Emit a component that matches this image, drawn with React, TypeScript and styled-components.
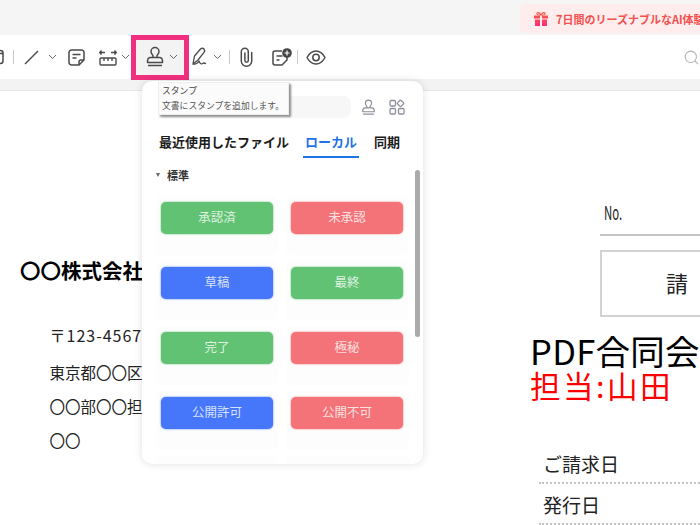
import React from "react";
import styled, { createGlobalStyle } from "styled-components";
import { Search } from "lucide-react";

const Global = createGlobalStyle`
  html, body { margin: 0; padding: 0; background: #fff; }
  body { font-family: "Noto Sans CJK JP", "Noto Sans", sans-serif; }
`;

const Page = styled.div`
  position: relative;
  width: 700px;
  height: 525px;
  overflow: hidden;
  display: flex;
  flex-direction: column;
  background: #fff;
`;

const TopBar = styled.header`
  height: 35px;
  flex: none;
  background: #f5f5f5;
  display: flex;
  justify-content: flex-end;
  align-items: flex-start;
  padding-top: 4px;
  box-sizing: border-box;
`;

const Promo = styled.div`
  width: 180px;
  height: 29px;
  background: #ffecec;
  border-radius: 6px 0 0 6px;
  display: flex;
  align-items: center;
  gap: 7px;
  padding-left: 13px;
  box-sizing: border-box;
  overflow: hidden;
  white-space: nowrap;
  color: #f2504f;
  font-size: 11px;
  font-weight: 700;
  svg { flex: none; }
`;

const Toolbar = styled.nav`
  height: 44px;
  flex: none;
  background: #fff;
  display: flex;
  align-items: center;
  position: relative;
  color: #4a4a4a;
`;

const ToolIcon = styled.span<{ $ml: number }>`
  margin-left: ${(p) => p.$ml}px;
  display: flex;
  flex: none;
  align-items: center;
`;

const Separator = styled.i<{ $ml: number }>`
  display: block;
  flex: none;
  width: 1px;
  height: 14px;
  background: #c8c8c8;
  margin-left: ${(p) => p.$ml}px;
`;

const Highlight = styled.div`
  margin-left: 1px;
  width: 58px;
  height: 45px;
  flex: none;
  box-sizing: border-box;
  border: 5px solid #f0307f;
  background: #f3f3f3;
  display: flex;
  align-items: center;
  padding-left: 8px;
  gap: 3px;
`;

const SearchSlot = styled.span`
  margin-left: auto;
  color: #b5b5b5;
  display: flex;
`;

const GrayBand = styled.div`
  height: 11px;
  flex: none;
  background: #f3f3f3;
  border-bottom: 1px solid #e6e6e8;
`;

const Sheet = styled.main`
  flex: 1;
  display: flex;
  background: #fff;
  color: #111;
  min-height: 0;
`;

const SenderColumn = styled.section`
  width: 530px;
  flex: none;
  padding: 166px 0 0 20px;
  box-sizing: border-box;
`;

const Company = styled.h2`
  margin: 0 0 40px;
  font-size: 20.5px;
  line-height: 26px;
  font-weight: 700;
  white-space: nowrap;
  color: #000;
`;

const SenderLine = styled.p<{ $gap: number; $spread?: boolean }>`
  margin: 0 0 ${(p) => p.$gap}px 29.5px;
  font-size: ${(p) => (p.$spread ? 16 : 15.5)}px;
  letter-spacing: ${(p) => (p.$spread ? 1 : 0)}px;
  line-height: 24px;
  white-space: nowrap;
  color: #222;
`;

const InvoiceColumn = styled.section`
  flex: 1;
  min-width: 0;
  overflow: hidden;
  display: flex;
  flex-direction: column;
  padding-top: 111px;
`;

const NumberRow = styled.div`
  margin-left: 70px;
  height: 32px;
  border-bottom: 2px solid #c4c4c4;
  padding-left: 4px;
  font-size: 19px;
  line-height: 20px;
  color: #222;
`;

const NumberLabel = styled.span`
  display: inline-block;
  transform: scaleX(0.6);
  transform-origin: left;
`;

const TitleBox = styled.div`
  margin: 14px 0 0 70px;
  width: 130px;
  height: 68px;
  box-sizing: border-box;
  border: 2px solid #d2d2d2;
  padding-left: 64px;
  font-size: 22px;
  line-height: 60px;
  color: #222;
`;

const ClientName = styled.div`
  margin-top: 14px;
  font-size: 34.5px;
  line-height: 38px;
  white-space: nowrap;
  letter-spacing: 0.3px;
  color: #000;
`;

const ContactName = styled.div`
  font-size: 30.5px;
  line-height: 32px;
  letter-spacing: 2.5px;
  white-space: nowrap;
  color: #ff0000;
`;

const DateRow = styled.div<{ $mt: number }>`
  margin: ${(p) => p.$mt}px 0 0 9px;
  height: 28px;
  padding-left: 4px;
  border-bottom: 2px dotted #c4c4c4;
  font-size: 19px;
  line-height: 20px;
  white-space: nowrap;
  color: #222;
`;

const Panel = styled.aside`
  position: absolute;
  left: 142px;
  top: 81px;
  width: 281px;
  height: 383px;
  background: #fff;
  border-radius: 10px;
  box-shadow: 0 0 8px rgba(0, 0, 0, 0.13);
  overflow: hidden;
  display: flex;
  flex-direction: column;
`;

const SearchRow = styled.div`
  margin: 15px 0 0 17px;
  height: 22px;
  display: flex;
  align-items: center;
  flex: none;
`;

const SearchField = styled.div`
  width: 192px;
  height: 22px;
  border-radius: 8px;
  background: #f7f7f8;
`;

const PanelIcon = styled.span<{ $ml: number }>`
  margin-left: ${(p) => p.$ml}px;
  display: flex;
  color: #8b8f9c;
`;

const Tabs = styled.div`
  margin: 13px 0 0 17px;
  height: 27px;
  display: flex;
  flex: none;
  white-space: nowrap;
`;

const Tab = styled.div<{ $active?: boolean; $ml: number; $w: number }>`
  margin-left: ${(p) => p.$ml}px;
  width: ${(p) => p.$w}px;
  box-sizing: border-box;
  height: 27px;
  text-align: center;
  font-size: 13px;
  line-height: 22px;
  font-weight: 700;
  color: ${(p) => (p.$active ? "#1f72ea" : "#1c1c1c")};
  border-bottom: 2px solid ${(p) => (p.$active ? "#1f72ea" : "transparent")};
`;

const SectionTitle = styled.div`
  margin: 8px 0 0 14px;
  height: 18px;
  display: flex;
  align-items: center;
  gap: 7px;
  flex: none;
  font-size: 11px;
  font-weight: 700;
  color: #333;
`;

const Caret = styled.i`
  width: 0;
  height: 0;
  border-left: 2.5px solid transparent;
  border-right: 2.5px solid transparent;
  border-top: 4px solid #666;
`;

const ScrollArea = styled.div`
  flex: 1;
  min-height: 0;
  overflow: hidden;
`;

const StampGrid = styled.div`
  margin: 12px 0 0 14px;
  display: grid;
  grid-template-columns: 122px 123px;
  grid-auto-rows: 59px;
  column-gap: 8px;
  row-gap: 6px;
`;

const StampCell = styled.div`
  background: #fdfdfd;
  border-radius: 6px;
  padding: 6px 5px;
  box-sizing: border-box;
`;

const colours = { green: "#62c274", red: "#f37378", blue: "#4677fb" };

const StampButton = styled.div<{ $tone: keyof typeof colours }>`
  height: 32px;
  width: 112px;
  box-sizing: border-box;
  padding-bottom: 4px;
  border-radius: 5px;
  background: ${(p) => colours[p.$tone]};
  box-shadow: 0 0 2px ${(p) => colours[p.$tone]};
  color: rgba(255, 255, 255, 0.8);
  display: flex;
  align-items: center;
  justify-content: center;
  font-size: 12.5px;
`;

const ScrollThumb = styled.div`
  position: absolute;
  right: 3px;
  top: 89px;
  width: 5px;
  height: 167px;
  border-radius: 3px;
  background: #ababab;
`;

const Tooltip = styled.div`
  position: absolute;
  left: 158px;
  top: 82px;
  width: 131px;
  height: 33px;
  box-sizing: border-box;
  padding: 0 0 0 3px;
  background: #fbfbfb;
  border: 1px solid #eee;
  box-shadow: 2px 2px 2px #8d8d8d;
  font-size: 8.8px;
  line-height: 15px;
  color: #555;
  white-space: nowrap;
`;

const TooltipTitle = styled.div`
  color: #444;
`;

const Chevron = () => (
  <svg width="9" height="6" viewBox="0 0 9 6" fill="none" stroke="#666" strokeWidth="1">
    <path d="M1 1l3.5 3.5L8 1" />
  </svg>
);

const StampIcon = ({ size = 22 }: { size?: number }) => (
  <svg width={size} height={size} viewBox="0 0 22 22" fill="none" stroke="currentColor" strokeWidth="1.5" strokeLinejoin="round">
    <path d="M9 11.5V10c0-1.200-2-2-2-4.500a4 4 0 0 1 8 0c0 2.500-2 3.300-2 4.500v1.500" />
    <path d="M3.5 15.500c0-2.500 1-4 3-4h9c2 0 3 1.500 3 4v1h-15z" />
    <path d="M4 19.500h14" />
  </svg>
);

const App = () => {
  const stamps: [string, keyof typeof colours][] = [
    ["承認済", "green"], ["未承認", "red"],
    ["草稿", "blue"], ["最終", "green"],
    ["完了", "green"], ["極秘", "red"],
    ["公開許可", "blue"], ["公開不可", "red"],
  ];
  return (
    <Page>
      <Global />
      <TopBar>
        <Promo>
          <svg width="16" height="16" viewBox="0 0 16 16">
            <defs>
              <linearGradient id="gift" x1="0" y1="0" x2="0" y2="1">
                <stop offset="0" stopColor="#f4574c" />
                <stop offset="1" stopColor="#ff2a7f" />
              </linearGradient>
            </defs>
            <path fill="url(#gift)" d="M1 4.500h6v3H1zM9 4.500h6v3H9zM2 8.500h5V15H2zM9 8.500h5V15H9z" />
            <path fill="none" stroke="#f4574c" strokeWidth="1.2" d="M8 4C6.500 1 3.500 1 4 3c.2 1 2 1 4 1zm0 0c1.500-3 4.500-3 4-1-.2 1-2 1-4 1z" />
          </svg>
          <span>7日間のリーズナブルなAI体験</span>
        </Promo>
      </TopBar>
      <Toolbar>
        <ToolIcon $ml={-11}>
          <svg width="15" height="16" viewBox="0 0 15 16" fill="none" stroke="currentColor" strokeWidth="1.5">
            <rect x="1" y="1.500" width="13" height="13" rx="2.500" />
            <path d="M8 1.500v3h6" />
          </svg>
        </ToolIcon>
        <Separator $ml={9} />
        <ToolIcon $ml={10}>
          <svg width="15" height="15" viewBox="0 0 15 15" fill="none" stroke="currentColor" strokeWidth="1.4">
            <path d="M1 14L14 1" />
          </svg>
        </ToolIcon>
        <ToolIcon $ml={9}><Chevron /></ToolIcon>
        <ToolIcon $ml={11}>
          <svg width="17" height="17" viewBox="0 0 17 17" fill="none" stroke="currentColor" strokeWidth="1.5" strokeLinejoin="round">
            <path d="M11 16H3.500A2.500 2.500 0 0 1 1 13.500v-10A2.500 2.500 0 0 1 3.500 1h10A2.500 2.500 0 0 1 16 3.500V11z" />
            <path d="M11 16v-3a2 2 0 0 1 2-2h3M4.500 5.500h8M4.500 9h4" />
          </svg>
        </ToolIcon>
        <ToolIcon $ml={14}>
          <svg width="18" height="17" viewBox="0 0 18 17" fill="none" stroke="currentColor" strokeWidth="1.4">
            <rect x="1" y="9" width="16" height="7" rx="1" />
            <path d="M5 9v3M9 9v3M13 9v3M1 3.500h5M12 3.500h5M2.500 1.500L.8 3.500l1.700 2M15.500 1.500l1.700 2-1.700 2" />
          </svg>
        </ToolIcon>
        <ToolIcon $ml={4}><Chevron /></ToolIcon>
        <Highlight>
          <StampIcon />
          <Chevron />
        </Highlight>
        <ToolIcon $ml={2}>
          <svg width="18" height="20" viewBox="0 0 18 20" fill="none" stroke="currentColor" strokeWidth="1.3" strokeLinejoin="round">
            <path d="M2 17L3.500 9 9.500 2c1-1 2.700-1 3.500 0s.8 2.300 0 3.300L7 13z" />
            <path d="M2 17c3 .5 5-1 6-3 .8 2.500 2 3.500 3.500 2.500 1-.7 2-.8 3.500.3" />
          </svg>
        </ToolIcon>
        <ToolIcon $ml={4}><Chevron /></ToolIcon>
        <Separator $ml={7} />
        <ToolIcon $ml={10}>
          <svg width="13" height="20" viewBox="0 0 13 20" fill="none" stroke="currentColor" strokeWidth="1.5" strokeLinecap="round">
            <path d="M11.700 5.500v8.500a5.200 5.200 0 0 1-10.400 0V4.800a3.500 3.500 0 0 1 7 0v8.700a1.700 1.700 0 0 1-3.400 0V6" />
          </svg>
        </ToolIcon>
        <ToolIcon $ml={19}>
          <svg width="20" height="19" viewBox="0 0 20 19" fill="none" stroke="currentColor" strokeWidth="1.5" strokeLinejoin="round">
            <path d="M10 3H3a2 2 0 0 0-2 2v10a2 2 0 0 0 2 2h7l5-5V9" />
            <path d="M4.500 8h6M4.500 12h3" />
            <circle cx="15" cy="5" r="4.800" fill="#444" stroke="none" />
            <path d="M15 2.500v5M12.500 5h5" stroke="#fff" strokeWidth="1.2" />
          </svg>
        </ToolIcon>
        <Separator $ml={5} />
        <ToolIcon $ml={8}>
          <svg width="20" height="15" viewBox="0 0 20 15" fill="none" stroke="currentColor" strokeWidth="1.5">
            <path d="M1 7.500C3.500 3 6.500 1 10 1s6.500 2 9 6.500c-2.500 4.500-5.500 6.500-9 6.500s-6.500-2-9-6.500z" />
            <circle cx="10" cy="7.500" r="3.200" />
          </svg>
        </ToolIcon>
        <SearchSlot><Search size={17} strokeWidth={1.5} /></SearchSlot>
      </Toolbar>
      <GrayBand />
      <Sheet>
        <SenderColumn>
          <Company>〇〇株式会社</Company>
          <SenderLine $gap={13} $spread>〒123-4567</SenderLine>
          <SenderLine $gap={10}>東京都〇〇区</SenderLine>
          <SenderLine $gap={10}>〇〇部〇〇担当</SenderLine>
          <SenderLine $gap={0}>〇〇</SenderLine>
        </SenderColumn>
        <InvoiceColumn>
          <NumberRow><NumberLabel>No.</NumberLabel></NumberRow>
          <TitleBox>請</TitleBox>
          <ClientName>PDF合同会</ClientName>
          <ContactName>担当:山田</ContactName>
          <DateRow $mt={53}>ご請求日</DateRow>
          <DateRow $mt={11}>発行日</DateRow>
        </InvoiceColumn>
      </Sheet>
      <Panel>
        <SearchRow>
          <SearchField />
          <PanelIcon $ml={9}><StampIcon size={17} /></PanelIcon>
          <PanelIcon $ml={12}>
            <svg width="16" height="16" viewBox="0 0 16 16" fill="none" stroke="currentColor" strokeWidth="1.3">
              <rect x="1" y="1.500" width="5.500" height="5.500" rx="1.200" />
              <rect x="1" y="9.500" width="5.500" height="5.500" rx="1.200" />
              <rect x="9.500" y="9.500" width="5.500" height="5.500" rx="1.200" />
              <rect x="9" y="1.800" width="5" height="5" rx="1" transform="rotate(45 11.500 4.300)" />
            </svg>
          </PanelIcon>
        </SearchRow>
        <Tabs>
          <Tab $ml={0} $w={129}>最近使用したファイル</Tab>
          <Tab $ml={15} $w={56} $active>ローカル</Tab>
          <Tab $ml={15} $w={26}>同期</Tab>
        </Tabs>
        <SectionTitle>
          <Caret />
          標準
        </SectionTitle>
        <ScrollArea>
          <StampGrid>
            {stamps.map(([label, tone]) => (
              <StampCell key={label}>
                <StampButton $tone={tone}>{label}</StampButton>
              </StampCell>
            ))}
            <StampCell />
            <StampCell />
          </StampGrid>
        </ScrollArea>
        <ScrollThumb />
      </Panel>
      <Tooltip>
        <TooltipTitle>スタンプ</TooltipTitle>
        文書にスタンプを追加します。
      </Tooltip>
    </Page>
  );
};

export default App;
